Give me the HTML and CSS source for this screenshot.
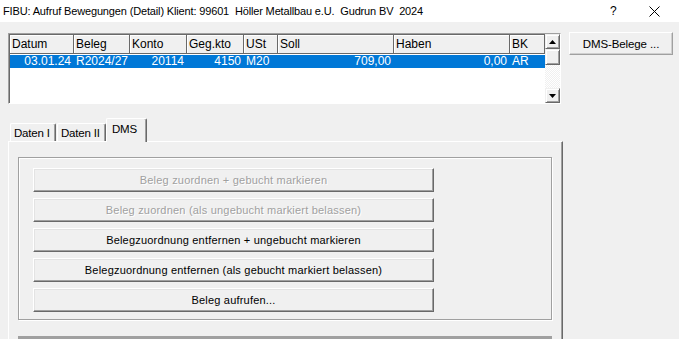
FILE: index.html
```html
<!DOCTYPE html>
<html lang="de">
<head>
    <title>FIBU: Aufruf Bewegungen (Detail)</title>
    <meta charset="utf-8">
    <link rel="stylesheet" href="styles.css">
</head>

<body>
    <div class="titlebar">
        <span class="title">FIBU: Aufruf Bewegungen (Detail) Klient: 99601&nbsp; Höller Metallbau e.U.&nbsp; Gudrun BV&nbsp; 2024</span>
        <span class="help">?</span>
        <span class="close">
            <svg width="11" height="11" viewBox="0 0 11 11"><path d="M0.5 0.5 L10.5 10.5 M10.5 0.5 L0.5 10.5" stroke="#000" stroke-width="1"/></svg>
        </span>
    </div>

    <div class="top">
        <div class="liste">
            <div class="tabelle">
                <div class="zeile kopf">
                    <div>Datum</div><div>Beleg</div><div>Konto</div><div>Geg.kto</div>
                    <div>USt</div><div>Soll</div><div>Haben</div><div>BK</div>
                </div>
                <div class="zeile auswahl">
                    <div class="r">03.01.24</div><div>R2024/27</div><div class="r">20114</div><div class="r">4150</div>
                    <div>M20</div><div class="r">709,00</div><div class="r">0,00</div><div>AR</div>
                </div>
            </div>
            <div class="scroll">
                <div class="pfeil"><svg width="7" height="4" viewBox="0 0 7 4"><path d="M3.5 0 L7 4 L0 4 Z" fill="#000"/></svg></div>
                <div class="daumen"></div>
                <div class="spur"></div>
                <div class="pfeil"><svg width="7" height="4" viewBox="0 0 7 4"><path d="M0 0 L7 0 L3.5 4 Z" fill="#000"/></svg></div>
            </div>
        </div>
        <button class="knopf dms">DMS-Belege ...</button>
    </div>

    <div class="reiter">
        <div class="reiter-item r1">Daten I</div>
        <div class="reiter-item r2">Daten II</div>
        <div class="reiter-item aktiv">DMS</div>
    </div>

    <div class="panel">
        <div class="gruppe">
            <button class="knopf breit aus">Beleg zuordnen + gebucht markieren</button>
            <button class="knopf breit aus">Beleg zuordnen (als ungebucht markiert belassen)</button>
            <button class="knopf breit">Belegzuordnung entfernen + ungebucht markieren</button>
            <button class="knopf breit">Belegzuordnung entfernen (als gebucht markiert belassen)</button>
            <button class="knopf breit">Beleg aufrufen...</button>
        </div>
        <div class="balken"></div>
    </div>
</body>
</html>
```

FILE: styles.css
```css
body {
    margin: 0;
    background: #f0f0f0;
    font-family: "Liberation Sans", Arial, sans-serif;
    font-size: 12px;
    color: #000;
    overflow: hidden;
    height: 339px;
}

.titlebar {
    height: 22px;
    background: #fff;
    display: flex;
    align-items: center;
    padding-left: 3px;
}

.title {
    flex: 1;
    white-space: nowrap;
    font-size: 11px;
    letter-spacing: -0.15px;
}

.help {
    width: 20px;
    margin-right: 19px;
    font-size: 12px;
}

.close {
    width: 30px;
    display: flex;
}

.top {
    display: flex;
    align-items: flex-start;
    margin-top: 11px;
    padding-left: 8px;
}

.liste {
    width: 553px;
    height: 71px;
    box-sizing: border-box;
    border: 1px solid;
    border-color: #a0a0a0 #fff #fff #a0a0a0;
    box-shadow: inset 1px 1px #696969;
    background: #fff;
    display: flex;
    padding: 1px 0 0 1px;
}

.tabelle {
    width: 535px;
}

.zeile {
    display: grid;
    grid-template-columns: 64px 56px 57px 57px 34px 116px 116px 35px;
}

.zeile div {
    padding: 0 3px 0 2px;
    white-space: nowrap;
    overflow: hidden;
}

.zeile .r {
    text-align: right;
    padding-right: 3px;
}

.kopf div {
    height: 18px;
    line-height: 18px;
    background: #f0f0f0;
    border-right: 1px solid #696969;
    border-bottom: 1px solid #696969;
    box-shadow: inset 1px 1px #fff;
}

.auswahl {
    margin-top: 1px;
    background: #0078d7;
    color: #fff;
    height: 13px;
    line-height: 13px;
}

.scroll {
    width: 16px;
    display: flex;
    flex-direction: column;
    margin-top: -1px;
}

.pfeil, .daumen {
    height: 15px;
    box-sizing: border-box;
    background: #f0f0f0;
    border: 1px solid;
    border-color: #f0f0f0 #696969 #696969 #f0f0f0;
    box-shadow: inset 1px 1px #fff, inset -1px -1px #a0a0a0;
    display: flex;
    align-items: center;
    justify-content: center;
}

.daumen {
    height: 16px;
}

.spur {
    flex: 1;
    background-color: #fff;
    background-image: repeating-conic-gradient(#f0f0f0 0 25%, #fff 0 50%);
    background-size: 2px 2px;
}

.knopf {
    font-family: "Liberation Sans", Arial, sans-serif;
    font-size: 11px;
    letter-spacing: 0.2px;
    color: #000;
    background: #f0f0f0;
    border: 1px solid;
    border-color: #fff #696969 #696969 #fff;
    box-shadow: inset -1px -1px #a0a0a0, inset 1px 1px #e3e3e3;
    padding: 0;
    margin: 0;
}

.dms {
    width: 104px;
    height: 23px;
    margin: -1px 0 0 8px;
    font-size: 11.5px;
    letter-spacing: -0.1px;
    border-color: #fff #a0a0a0 #a0a0a0 #fff;
    box-shadow: inset -1px -1px #cfcfcf;
}

.reiter {
    display: flex;
    align-items: flex-end;
    margin-top: 14px;
    padding-left: 10px;
    height: 23px;
    position: relative;
    z-index: 1;
}

.reiter-item {
    height: 18px;
    line-height: 19px;
    box-sizing: border-box;
    border: 1px solid;
    border-bottom: none;
    border-color: #fff #696969 #fff #fff;
    box-shadow: inset -1px 0 #a0a0a0;
    border-radius: 2px 2px 0 0;
    padding-left: 3px;
    font-size: 11.5px;
    letter-spacing: -0.2px;
    white-space: nowrap;
}

.r1 { width: 46px; }
.r2 { width: 49px; margin-left: 1px; }

.aktiv {
    width: 41px;
    height: 24px;
    line-height: 21px;
    padding-left: 5px;
    margin-bottom: -1px;
    background: #f0f0f0;
}

.panel {
    margin-left: 8px;
    width: 555px;
    height: 200px;
    box-sizing: border-box;
    border: 1px solid;
    border-color: #fff #696969 #696969 #fff;
    box-shadow: inset -1px 0 #a0a0a0;
    padding: 15px 0 0 9px;
}

.gruppe {
    width: 534px;
    height: 163px;
    box-sizing: border-box;
    border: 1px solid #a0a0a0;
    box-shadow: inset 1px 1px #fff, 1px 1px #fff;
    padding: 10px 0 0 14px;
    display: flex;
    flex-direction: column;
    gap: 6px;
}

.breit {
    width: 401px;
    height: 24px;
}

.aus {
    color: #a0a0a0;
    text-shadow: 1px 1px #fff;
}

.balken {
    width: 534px;
    height: 4px;
    margin-top: 16px;
    background: #a0a0a0;
}
```
